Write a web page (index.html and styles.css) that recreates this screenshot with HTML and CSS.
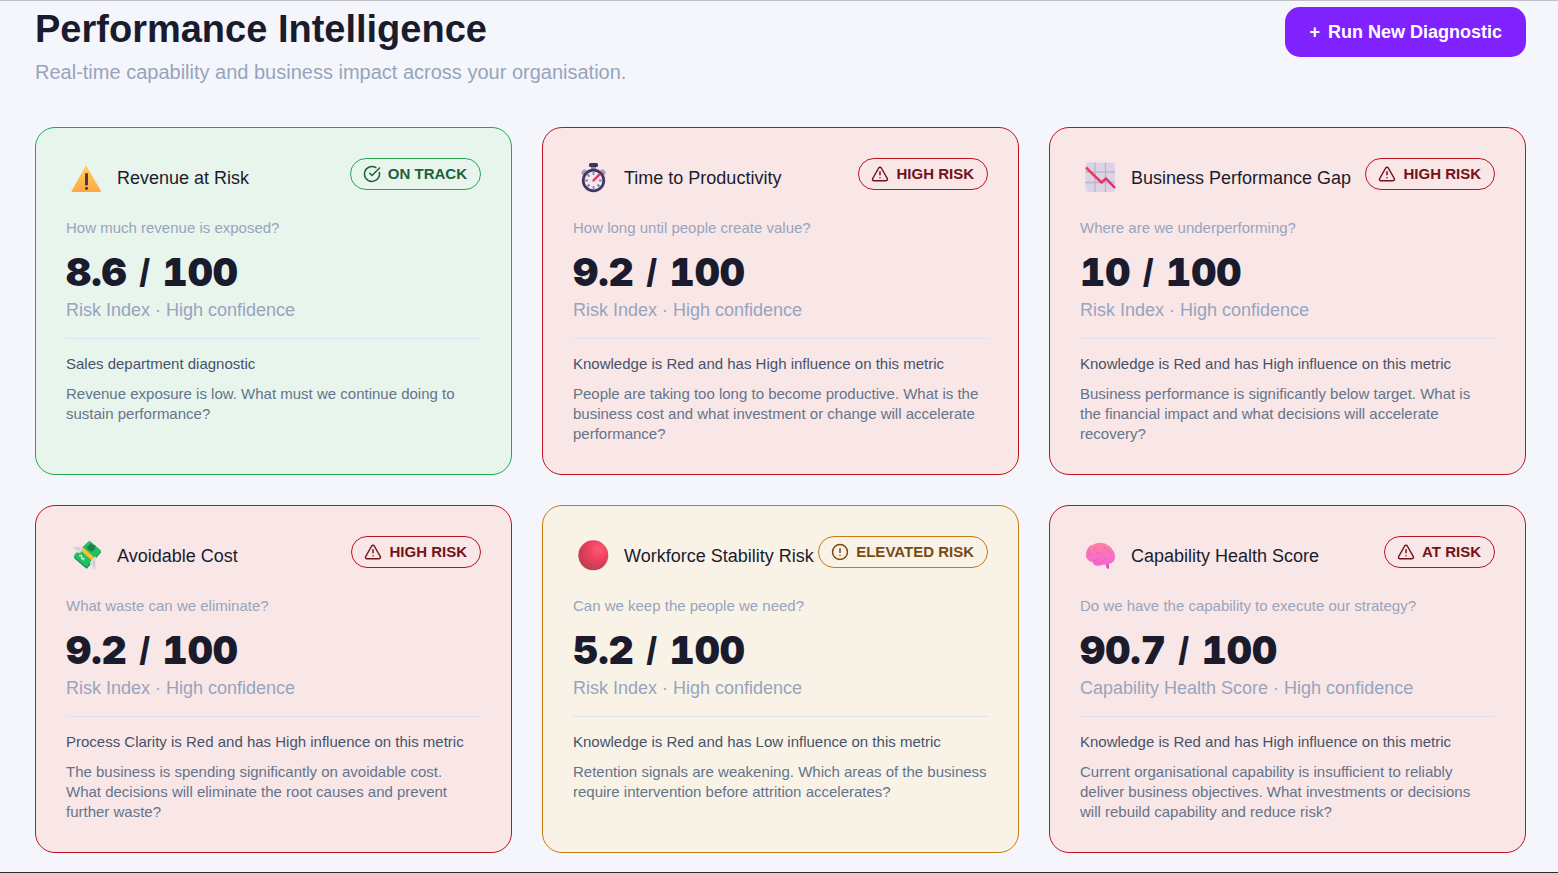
FILE: index.html
```html
<!DOCTYPE html>
<html lang="en">
<head>
<meta charset="utf-8">
<meta name="viewport" content="width=device-width, initial-scale=1">
<title>Performance Intelligence</title>
<link rel="stylesheet" href="styles.css">
</head>
<body>
<svg class="sprite" aria-hidden="true">
  <defs>
    <linearGradient id="amber" x1="0" y1="0" x2="0" y2="1"><stop offset="0" stop-color="#ffd05c"/><stop offset="1" stop-color="#fda745"/></linearGradient>
    <radialGradient id="ruby" cx=".68" cy=".3" r=".75"><stop offset="0" stop-color="#ff5876"/><stop offset=".55" stop-color="#e73f59"/><stop offset="1" stop-color="#b94052"/></radialGradient>
    <linearGradient id="fall" x1="0" y1="0" x2="1" y2="0"><stop offset="0" stop-color="#f04450"/><stop offset="1" stop-color="#d6297c"/></linearGradient>
    <linearGradient id="pink" x1="0" y1="0" x2="0" y2="1"><stop offset="0" stop-color="#ff829f"/><stop offset=".5" stop-color="#fb72c5"/><stop offset="1" stop-color="#f064d3"/></linearGradient>
    <symbol id="triangle" viewBox="0 0 24 24"><path d="m21.73 18-8-14a2 2 0 0 0-3.48 0l-8 14A2 2 0 0 0 4 21h16a2 2 0 0 0 1.73-3M12 9v4M12 17h.01"/></symbol>
    <symbol id="check" viewBox="0 0 24 24"><path d="M21.801 10A10 10 0 1 1 17 3.335M9 11l3 3L22 4"/></symbol>
    <symbol id="alert" viewBox="0 0 24 24"><circle cx="12" cy="12" r="10"/><path d="M12 7.500v5M12 16.500h.01"/></symbol>
  </defs>
</svg>

<header class="page-header">
  <div>
    <h1 class="page-title">Performance Intelligence</h1>
    <p class="page-subtitle">Real-time capability and business impact across your organisation.</p>
  </div>
  <button class="run-button" type="button"><span>+</span><span>Run New Diagnostic</span></button>
</header>

<main class="cards">
  <article class="card card-green">
    <div class="card-head">
      <svg class="emoji" viewBox="0 0 40 40" aria-hidden="true"><path d="M20.500 8 35 33q.5 1-.6 1H6.200q-1.200 0-.6-1L19.500 8q.5-.8 1 0Z" fill="url(#amber)"/><rect x="19" y="15" width="3" height="12.500" rx="1.300" fill="#54364a"/><rect x="19" y="29" width="3" height="2.800" rx="1" fill="#54364a"/></svg>
      <h2 class="card-title">Revenue at Risk</h2>
      <span class="badge"><svg class="badge-icon" aria-hidden="true"><use href="#check"/></svg>ON TRACK</span>
    </div>
    <p class="question">How much revenue is exposed?</p>
    <p class="score">8.6 <span class="slash">/</span> 100</p>
    <p class="basis">Risk Index · High confidence</p>
    <div class="detail"><p class="driver">Sales department diagnostic</p><p class="advice">Revenue exposure is low. What must we continue doing to sustain performance?</p></div>
  </article>

  <article class="card card-red">
    <div class="card-head">
      <svg class="emoji" viewBox="0 0 40 40" aria-hidden="true"><g fill="#a79fb1"><rect x="8" y="12" width="6" height="5" rx="2" transform="rotate(-42 11 14)"/><rect x="27" y="12" width="6" height="5" rx="2" transform="rotate(42 30 14)"/></g><path d="M18 8h5v6h-5z" fill="#8d879c"/><rect x="16" y="5" width="9" height="4" rx="1.500" fill="#3f325d"/><circle cx="20.500" cy="22.500" r="10.300" fill="#eee9f3" stroke="#403763" stroke-width="2.700"/><path d="M20.500 14v3m0 11v3M12 22.500h3m11 0h3M14.500 16.500l2 2m8 8 2 2m-12 0 2-2" stroke="#8b849a" stroke-width="1.800"/><path d="m20.500 22.500 5.800-5.800" stroke="#f22e5a" stroke-width="2.400" stroke-linecap="round"/></svg>
      <h2 class="card-title">Time to Productivity</h2>
      <span class="badge"><svg class="badge-icon" aria-hidden="true"><use href="#triangle"/></svg>HIGH RISK</span>
    </div>
    <p class="question">How long until people create value?</p>
    <p class="score">9.2 <span class="slash">/</span> 100</p>
    <p class="basis">Risk Index · High confidence</p>
    <div class="detail"><p class="driver">Knowledge is Red and has High influence on this metric</p><p class="advice">People are taking too long to become productive. What is the business cost and what investment or change will accelerate performance?</p></div>
  </article>

  <article class="card card-red">
    <div class="card-head">
      <svg class="emoji" viewBox="0 0 40 40" aria-hidden="true"><rect x="5.500" y="4.500" width="29.500" height="29.500" rx="3" fill="#dcd3e4"/><path d="M15 4.500V34M25.500 4.500V34M5.500 14H35M5.500 24.500H35" stroke="#bdb4ce" stroke-width="1.300"/><path d="m6 9.500 15.500 15 4.500-4L35 30" fill="none" stroke="url(#fall)" stroke-width="2.500" stroke-linejoin="round"/></svg>
      <h2 class="card-title">Business Performance Gap</h2>
      <span class="badge"><svg class="badge-icon" aria-hidden="true"><use href="#triangle"/></svg>HIGH RISK</span>
    </div>
    <p class="question">Where are we underperforming?</p>
    <p class="score">10 <span class="slash">/</span> 100</p>
    <p class="basis">Risk Index · High confidence</p>
    <div class="detail"><p class="driver">Knowledge is Red and has High influence on this metric</p><p class="advice">Business performance is significantly below target. What is the financial impact and what decisions will accelerate recovery?</p></div>
  </article>

  <article class="card card-red">
    <div class="card-head">
      <svg class="emoji" viewBox="0 0 40 40" aria-hidden="true"><path d="m8.500 20 14-14q1-1 2 0l10 9q1.200 1 0 2l-13 15q-1 1-2 0l-11-9.500q-1-1 0-2.500Z" fill="#0f9658"/><path d="m8.500 18.500 14-13q1-1 2 0l10 8.500q1 1 0 2l-13 14q-1 1-2 0l-11-9q-1-1 0-2.500Z" fill="#27bd65"/><path d="m20.500 12 4-4.500 2.500 1.500 2.500.5-.5 3.500-3.500 3Z" fill="#13864d"/><path d="m13 20 3-.5-.5 3.500 3.500-.5M14 18.500l4 6" fill="none" stroke="#c9f7d4"/><path d="m16 10.500 13.500 12-2.500 3-13.500-12Z" fill="#ffbd36"/><path d="M16.500 11 6.500 10l1.500 4 2 .5 1 2 3 .5 2.500-3.500ZM26.500 23l3.500-2.500V34l-3.500-1-.8-2-1.700-1.500.5-4Z" fill="#e1dce6"/><path d="m9.500 12 5 1.500m13 11 .5 6" stroke="#bdb5c7"/></svg>
      <h2 class="card-title">Avoidable Cost</h2>
      <span class="badge"><svg class="badge-icon" aria-hidden="true"><use href="#triangle"/></svg>HIGH RISK</span>
    </div>
    <p class="question">What waste can we eliminate?</p>
    <p class="score">9.2 <span class="slash">/</span> 100</p>
    <p class="basis">Risk Index · High confidence</p>
    <div class="detail"><p class="driver">Process Clarity is Red and has High influence on this metric</p><p class="advice">The business is spending significantly on avoidable cost. What decisions will eliminate the root causes and prevent further waste?</p></div>
  </article>

  <article class="card card-amber">
    <div class="card-head">
      <svg class="emoji" viewBox="0 0 40 40" aria-hidden="true"><circle cx="20.300" cy="19.300" r="15" fill="url(#ruby)"/></svg>
      <h2 class="card-title">Workforce Stability Risk</h2>
      <span class="badge"><svg class="badge-icon" aria-hidden="true"><use href="#alert"/></svg>ELEVATED RISK</span>
    </div>
    <p class="question">Can we keep the people we need?</p>
    <p class="score">5.2 <span class="slash">/</span> 100</p>
    <p class="basis">Risk Index · High confidence</p>
    <div class="detail"><p class="driver">Knowledge is Red and has Low influence on this metric</p><p class="advice">Retention signals are weakening. Which areas of the business require intervention before attrition accelerates?</p></div>
  </article>

  <article class="card card-red">
    <div class="card-head">
      <svg class="emoji" viewBox="0 0 40 40" aria-hidden="true"><path d="M26 26v3.500q0 2 1.500 3.200h1.500V26Z" fill="#db52b7"/><path d="M13.500 8.500Q17 6.300 21 7q4-.5 6.500 2 3.500 1 4.800 4.500 3.200 3.500 2.700 8-.5 5-5 6-3 2-6.500 1-3 1.500-7 1.300-3.500-1-4-4-3.500.5-5.500-3-2.500-4.500 0-8.500 1.500-5 6.500-5.800Z" fill="url(#pink)"/><path d="M16 10q-3 2-1 5m8-6q3 2 1 5m-8 3q4-2 7 1m4-4q4 1 4 5M8 18q3-2 5 1m-1 6q5 0 7-3m3 5q0-4 5-4m-16-9q-2-1-4 1" fill="none" stroke="#e9639e" stroke-width=".8"/></svg>
      <h2 class="card-title">Capability Health Score</h2>
      <span class="badge"><svg class="badge-icon" aria-hidden="true"><use href="#triangle"/></svg>AT RISK</span>
    </div>
    <p class="question">Do we have the capability to execute our strategy?</p>
    <p class="score">90.7 <span class="slash">/</span> 100</p>
    <p class="basis">Capability Health Score · High confidence</p>
    <div class="detail"><p class="driver">Knowledge is Red and has High influence on this metric</p><p class="advice">Current organisational capability is insufficient to reliably deliver business objectives. What investments or decisions will rebuild capability and reduce risk?</p></div>
  </article>
</main>
</body>
</html>
```

FILE: styles.css
```css
* { box-sizing: border-box; }

body {
  margin: 0;
  min-height: 100vh;
  padding: 6px 32px 19px 35px;
  border-top: 1px solid #c1c2c8;
  border-bottom: 1px solid #2b2c31;
  background: #f4f6fb;
  color: #1a1c2e;
  font-family: "Liberation Sans", Arial, sans-serif;
}

h1, h2, p { margin: 0; }

.sprite { display: block; width: 0; height: 0; }

.page-header {
  display: flex;
  align-items: flex-start;
  justify-content: space-between;
  gap: 30px;
  margin-bottom: 43px;
}

.page-title { font-size: 38px; line-height: 44px; font-weight: 700; }

.page-subtitle {
  margin-top: 9px;
  color: #97a4bd;
  font-size: 20px;
  line-height: 24px;
}

.run-button {
  display: flex;
  flex-shrink: 0;
  align-items: center;
  gap: 8px;
  height: 50px;
  padding: 0 24px;
  border: 0;
  border-radius: 15px;
  background: #7f22fe;
  color: #fff;
  font: 700 18px/24px "Liberation Sans", Arial, sans-serif;
  white-space: nowrap;
  cursor: pointer;
}

.cards {
  display: grid;
  grid-template-columns: repeat(auto-fit, minmax(440px, 1fr));
  gap: 30px;
}

.card {
  padding: 30px;
  border: 1px solid var(--edge);
  border-radius: 20px;
  background: var(--fill);
}

.card-green { --edge: #22a84f; --fill: #e8f5ed; --ink: #1c6238; }
.card-red { --edge: #bd1220; --fill: #f9e7e7; --ink: #741119; }
.card-amber { --edge: #c67a10; --fill: #f9f3e7; --ink: #784a12; }

.card-head {
  display: flex;
  align-items: center;
  height: 40px;
  margin-bottom: 20px;
}

.emoji { flex: none; width: 40px; height: 40px; margin-right: 11px; }

.card-title {
  font-size: 18px;
  line-height: 24px;
  font-weight: 400;
  white-space: nowrap;
}

.badge {
  display: flex;
  flex: none;
  align-items: center;
  align-self: flex-start;
  gap: 7px;
  height: 32px;
  margin-left: auto;
  padding: 0 13px 0 12px;
  border: 1px solid var(--edge);
  border-radius: 16px;
  color: var(--ink);
  font-size: 15px;
  line-height: 20px;
  font-weight: 700;
}

.badge-icon {
  width: 18px;
  height: 18px;
  fill: none;
  stroke: currentColor;
  stroke-width: 2;
  stroke-linecap: round;
  stroke-linejoin: round;
}

.question { color: #97a4bd; font-size: 15px; line-height: 20px; }

.score {
  margin-top: 10px;
  font-family: Inter, "Liberation Sans", sans-serif;
  font-size: 39px;
  line-height: 48px;
  font-weight: 900;
  font-variant-numeric: tabular-nums;
}

.slash {
  padding: 0 2px;
  font-family: "Liberation Sans", Arial, sans-serif;
  font-weight: 700;
  line-height: 1;
}

.basis {
  margin-top: 2px;
  color: #97a4bd;
  font-size: 18px;
  line-height: 24px;
}

.detail {
  margin-top: 16px;
  padding-top: 15px;
  border-top: 1px solid #dde3ee;
  font-size: 15px;
  line-height: 20px;
}

.driver { color: #46536a; }

.advice { margin-top: 10px; color: #64748b; }
```
